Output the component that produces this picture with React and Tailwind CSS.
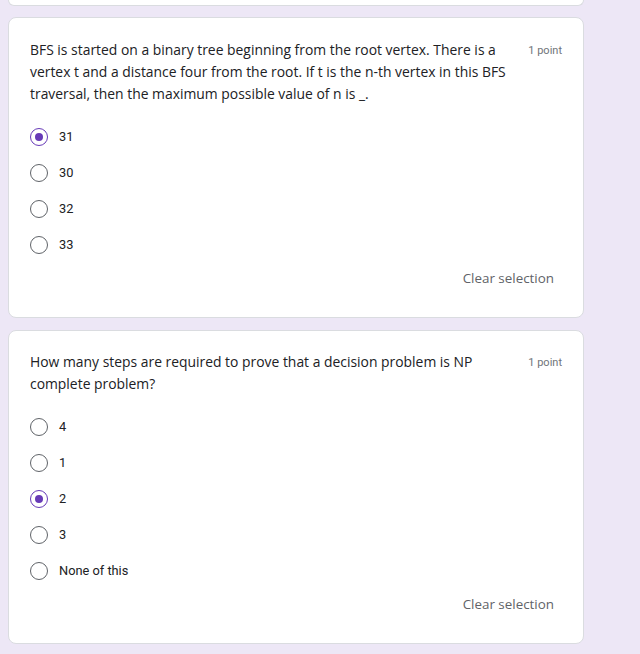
import React from "react";

function Radio({ checked }) {
  return (
    <div
      className={
        "w-[18px] h-[18px] rounded-full border-[1.5px] flex items-center justify-center shrink-0 " +
        (checked ? "border-[#673ab7]" : "border-[#5f6368]")
      }
    >
      {checked && <div className="w-[8px] h-[8px] rounded-full bg-[#673ab7]" />}
    </div>
  );
}

function Option({ label, checked }) {
  return (
    <div className="h-[36px] flex items-center">
      <Radio checked={checked} />
      <span className="ml-[11px] text-[12.8px] text-[#202124] font-['Roboto',sans-serif]">{label}</span>
    </div>
  );
}

function Card({ lines, options, selected, pt, gap }) {
  return (
    <div className="ml-[8px] w-[576px] bg-white border border-[#dadce0] rounded-lg">
      <div className={"flex justify-between pl-[21px] pr-[21px] " + pt}>
        <div className="text-[13.9px] leading-[22px] text-[#202124] font-['Open_Sans','Roboto',sans-serif]">
          {lines.map((l, i) => (
            <div key={i} className="whitespace-nowrap">{l}</div>
          ))}
        </div>
        <div className="text-[11px] leading-[22px] pt-[1px] text-[#70757a] font-['Roboto',sans-serif] whitespace-nowrap">1 point</div>
      </div>
      <div className={"pl-[21px] " + gap}>
        {options.map((o) => (
          <Option key={o} label={o} checked={o === selected} />
        ))}
      </div>
      <div className="flex justify-end pr-[29px] h-[30px] items-center mb-[24px]">
        <span className="text-[13.4px] font-medium text-[#5f6368] font-['Open_Sans','Roboto',sans-serif]">Clear selection</span>
      </div>
    </div>
  );
}

export default function App() {
  return (
    <div className="w-[640px] h-[654px] bg-[#ede7f6] overflow-hidden">
      <div className="ml-[8px] w-[576px] h-[6px] bg-white border border-t-0 border-[#dadce0] rounded-b-lg" />
      <div className="h-[11px]" />
      <Card
        pt="pt-[21px]"
        gap="mt-[14px]"
        lines={[
          "BFS is started on a binary tree beginning from the root vertex. There is a",
          "vertex t and a distance four from the root. If t is the n-th vertex in this BFS",
          "traversal, then the maximum possible value of n is _.",
        ]}
        options={["31", "30", "32", "33"]}
        selected="31"
      />
      <div className="h-[12px]" />
      <Card
        pt="pt-[20px]"
        gap="mt-[14px]"
        lines={[
          "How many steps are required to prove that a decision problem is NP",
          "complete problem?",
        ]}
        options={["4", "1", "2", "3", "None of this"]}
        selected="2"
      />
    </div>
  );
}
